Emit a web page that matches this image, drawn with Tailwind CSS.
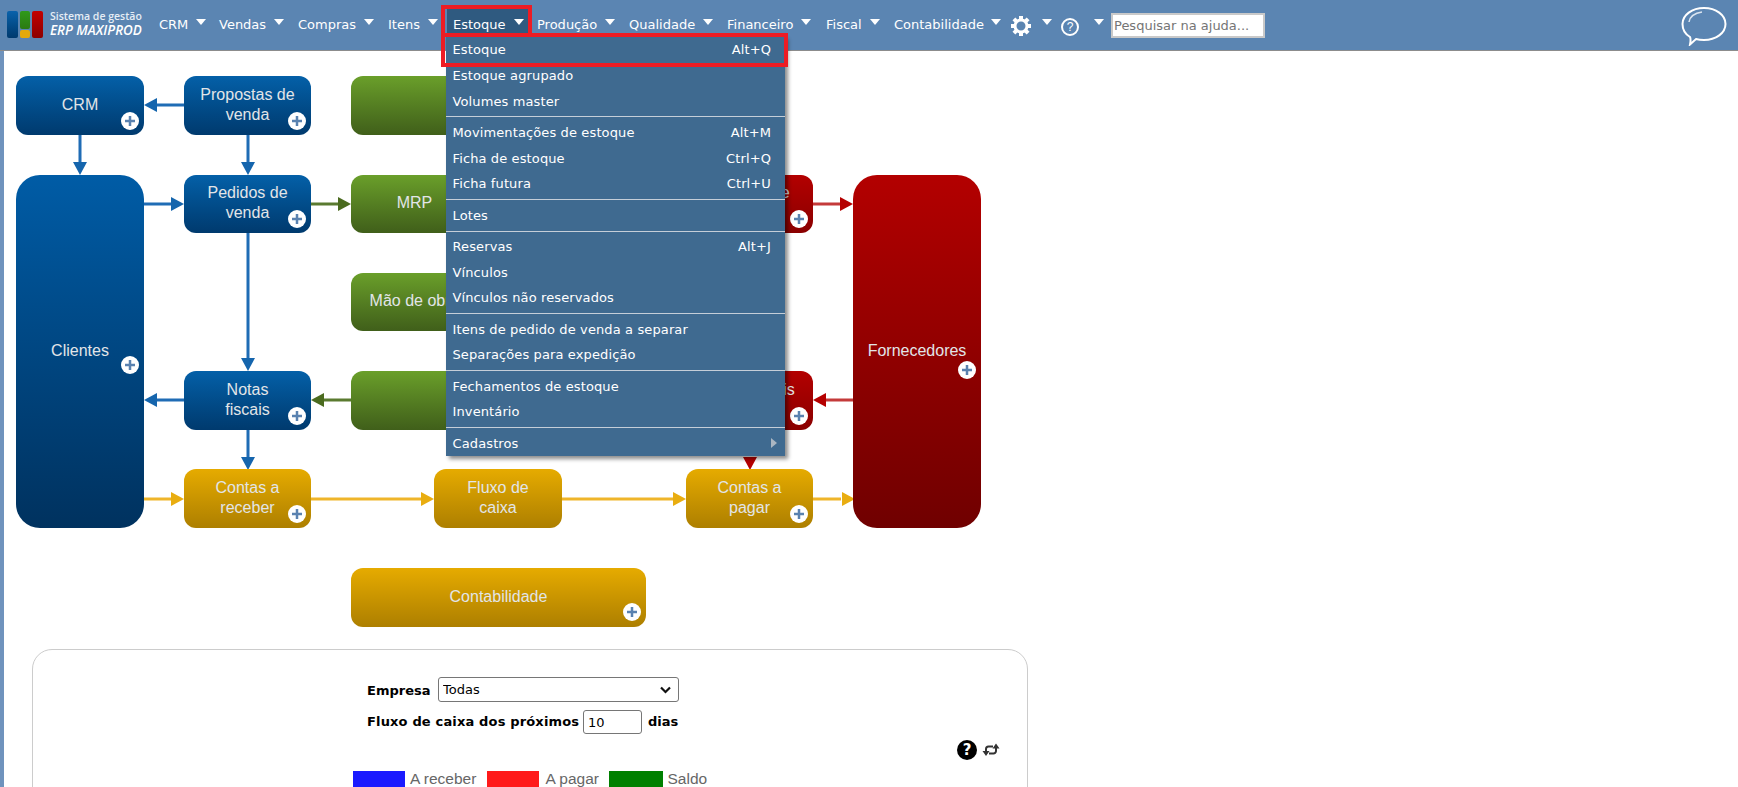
<!DOCTYPE html>
<html lang="pt-BR">
<head>
    <meta charset="UTF-8">
    <title>ERP MAXIPROD</title>
    <script src="https://cdn.jsdelivr.net/npm/@tailwindcss/browser@4"></script>
</head>
<body class="h-[787px] overflow-hidden bg-white font-['DejaVu_Sans',sans-serif] text-[13px]">
    <!-- Top menu -->
    <header class="relative z-20 flex h-[51px] items-center border-b border-[#8c8c8c] bg-[#5b85b2] text-white">
        <!-- Logo -->
        <div class="flex w-[159px] shrink-0 -translate-y-[1px] items-center pl-[7px]">
            <div class="flex h-[27px] w-[36px] shrink-0 gap-[2px]">
                <div class="w-[11px] rounded-[2px] bg-gradient-to-b from-[#0a62ab] to-[#003a6e]"></div>
                <div class="flex w-[11px] flex-col gap-[1px]">
                    <div class="h-[18px] rounded-[2px] bg-gradient-to-b from-[#2f9a1a] to-[#2b7a12]"></div>
                    <div class="h-[8px] rounded-[2px] bg-[#e3a90c]"></div>
                </div>
                <div class="w-[11px] rounded-[2px] bg-gradient-to-b from-[#c40000] to-[#8c0000]"></div>
            </div>
            <div class="ml-[7px] whitespace-nowrap font-['Open_Sans',sans-serif] leading-none">
                <div class="text-[10.5px] font-semibold text-[#e6edf5]">Sistema de gestão</div>
                <div class="mt-[3px] text-[13.4px] font-semibold italic">ERP MAXIPROD</div>
            </div>
        </div>

        <nav class="flex items-center whitespace-nowrap">
            <a class="flex w-[60px] items-center">CRM<i class="ml-[8px] h-0 w-0 -translate-y-[3px] border-x-[5.5px] border-t-[6px] border-x-transparent border-t-white"></i></a>
            <a class="flex w-[79px] items-center">Vendas<i class="ml-[8px] h-0 w-0 -translate-y-[3px] border-x-[5.5px] border-t-[6px] border-x-transparent border-t-white"></i></a>
            <a class="flex w-[90px] items-center">Compras<i class="ml-[8px] h-0 w-0 -translate-y-[3px] border-x-[5.5px] border-t-[6px] border-x-transparent border-t-white"></i></a>
            <a class="flex w-[65px] items-center">Itens<i class="ml-[8px] h-0 w-0 -translate-y-[3px] border-x-[5.5px] border-t-[6px] border-x-transparent border-t-white"></i></a>
            <a class="relative flex w-[84px] items-center">
                <span class="absolute -left-[6px] -top-[8px] h-[30px] w-[81px] bg-[#2f5a80]"></span>
                <span class="relative">Estoque</span><i class="relative ml-[8px] h-0 w-0 -translate-y-[3px] border-x-[5.5px] border-t-[6px] border-x-transparent border-t-white"></i>
            </a>
            <a class="flex w-[92px] items-center">Produção<i class="ml-[8px] h-0 w-0 -translate-y-[3px] border-x-[5.5px] border-t-[6px] border-x-transparent border-t-white"></i></a>
            <a class="flex w-[98px] items-center">Qualidade<i class="ml-[8px] h-0 w-0 -translate-y-[3px] border-x-[5.5px] border-t-[6px] border-x-transparent border-t-white"></i></a>
            <a class="flex w-[99px] items-center">Financeiro<i class="ml-[8px] h-0 w-0 -translate-y-[3px] border-x-[5.5px] border-t-[6px] border-x-transparent border-t-white"></i></a>
            <a class="flex w-[68px] items-center">Fiscal<i class="ml-[8px] h-0 w-0 -translate-y-[3px] border-x-[5.5px] border-t-[6px] border-x-transparent border-t-white"></i></a>
            <a class="flex w-[115px] items-center">Contabilidade<i class="ml-[7px] h-0 w-0 -translate-y-[3px] border-x-[5.5px] border-t-[6px] border-x-transparent border-t-white"></i></a>
        </nav>

        <!-- Gear -->
        <div class="flex w-[50px] items-center">
            <svg class="ml-[1px] mt-[1px] h-[22px] w-[22px]" viewBox="0 0 22 22">
                <circle cx="11" cy="11" r="6" fill="none" stroke="#fff" stroke-width="3"/>
                <g fill="#fff">
                    <rect x="9" y="1" width="4" height="4"/>
                    <rect x="9" y="17" width="4" height="4"/>
                    <rect x="1" y="9" width="4" height="4"/>
                    <rect x="17" y="9" width="4" height="4"/>
                    <rect x="9" y="1" width="4" height="4" transform="rotate(45 11 11)"/>
                    <rect x="9" y="17" width="4" height="4" transform="rotate(45 11 11)"/>
                    <rect x="1" y="9" width="4" height="4" transform="rotate(45 11 11)"/>
                    <rect x="17" y="9" width="4" height="4" transform="rotate(45 11 11)"/>
                </g>
            </svg>
            <i class="ml-[10px] h-0 w-0 -translate-y-[3px] border-x-[5.5px] border-t-[6px] border-x-transparent border-t-white"></i>
        </div>
        <!-- Help -->
        <div class="flex w-[52px] items-center">
            <span class="ml-[2px] mt-[3px] flex h-[18px] w-[18px] items-center justify-center rounded-full border-2 border-white font-['Liberation_Sans',sans-serif] text-[12px] leading-none">?</span>
            <i class="ml-[15px] h-0 w-0 -translate-y-[3px] border-x-[5.5px] border-t-[6px] border-x-transparent border-t-white"></i>
        </div>

        <input class="h-[25px] w-[154px] border-2 border-[#c9c9c9] bg-white pl-[1px] text-[13px] text-[#757575] placeholder:text-[#757575]" placeholder="Pesquisar na ajuda...">

        <svg class="absolute left-[1681px] top-[6px] h-[40px] w-[46px]" viewBox="0 0 46 40">
            <path d="M9 31C4 28 1.500 23 1.500 18 1.500 9 11 2 23 2s21.500 7 21.500 16S35 34 23 34c-3 0-6-.4-8-1l-6 5.500C9.500 36 10 33 9 31Z" fill="none" stroke="#fff" stroke-width="2"/>
            <path d="M8 16C9 10 14 7 21 6" fill="none" stroke="#dbe5f0" stroke-width="1.500"/>
        </svg>

        <!-- Open dropdown -->
        <div class="absolute left-[446px] top-[36px] w-[339px] bg-[#3f6a90] pt-[1px] tracking-[0.12px] shadow-[3px_3px_4px_rgba(0,0,0,0.45)]">
            <a class="flex h-[25.72px] items-center justify-between pl-[6.5px] pr-[14px]"><span>Estoque</span><span>Alt+Q</span></a>
            <a class="flex h-[25.72px] items-center justify-between pl-[6.5px] pr-[14px]"><span>Estoque agrupado</span></a>
            <a class="flex h-[25.72px] items-center justify-between pl-[6.5px] pr-[14px]"><span>Volumes master</span></a>
            <hr class="my-[2.3px] border-t border-[#c5ced8]">
            <a class="flex h-[25.72px] items-center justify-between pl-[6.5px] pr-[14px]"><span>Movimentações de estoque</span><span>Alt+M</span></a>
            <a class="flex h-[25.72px] items-center justify-between pl-[6.5px] pr-[14px]"><span>Ficha de estoque</span><span>Ctrl+Q</span></a>
            <a class="flex h-[25.72px] items-center justify-between pl-[6.5px] pr-[14px]"><span>Ficha futura</span><span>Ctrl+U</span></a>
            <hr class="my-[2.3px] border-t border-[#c5ced8]">
            <a class="flex h-[25.72px] items-center justify-between pl-[6.5px] pr-[14px]"><span>Lotes</span></a>
            <hr class="my-[2.3px] border-t border-[#c5ced8]">
            <a class="flex h-[25.72px] items-center justify-between pl-[6.5px] pr-[14px]"><span>Reservas</span><span>Alt+J</span></a>
            <a class="flex h-[25.72px] items-center justify-between pl-[6.5px] pr-[14px]"><span>Vínculos</span></a>
            <a class="flex h-[25.72px] items-center justify-between pl-[6.5px] pr-[14px]"><span>Vínculos não reservados</span></a>
            <hr class="my-[2.3px] border-t border-[#c5ced8]">
            <a class="flex h-[25.72px] items-center justify-between pl-[6.5px] pr-[14px]"><span>Itens de pedido de venda a separar</span></a>
            <a class="flex h-[25.72px] items-center justify-between pl-[6.5px] pr-[14px]"><span>Separações para expedição</span></a>
            <hr class="my-[2.3px] border-t border-[#c5ced8]">
            <a class="flex h-[25.72px] items-center justify-between pl-[6.5px] pr-[14px]"><span>Fechamentos de estoque</span></a>
            <a class="flex h-[25.72px] items-center justify-between pl-[6.5px] pr-[14px]"><span>Inventário</span></a>
            <hr class="my-[2.3px] border-t border-[#c5ced8]">
            <a class="flex h-[25.72px] items-center justify-between pl-[6.5px] pr-[8px]"><span>Cadastros</span><i class="h-0 w-0 border-y-[5px] border-l-[6px] border-y-transparent border-l-[#aab6c2]"></i></a>
        </div>

        <!-- Red annotation boxes -->
        <div class="absolute left-[441px] top-[5px] h-[32px] w-[91px] border-4 border-[#ed1c24]"></div>
        <div class="absolute left-[441px] top-[33px] h-[34px] w-[347px] border-4 border-[#ed1c24]"></div>
    </header>

    <main class="h-[736px] overflow-hidden border-l-4 border-[#6f93bd]">
        <!-- Flow diagram -->
        <div class="relative h-[587px] font-['Liberation_Sans',sans-serif] text-[16px] leading-[20px] text-[#e2e5e8]">
            <svg class="absolute left-0 top-0 h-[587px] w-[1000px]" viewBox="0 0 1000 587">
                <g stroke-width="3" fill="none">
                    <path stroke="#1f6cb5" d="M180 54H152M76 84V112M244 84V112M140 153H168M244 182V308M180 349H152M244 379V406"/>
                    <path stroke="#5a7a30" d="M307 153H335M347 349H319"/>
                    <path stroke="#c43a3a" d="M809 153H837M849 349H821"/>
                    <path stroke="#efb52a" d="M140 448H168M307 448H418M558 448H670M809 448H837"/>
                </g>
                <g fill="#1565ad">
                    <polygon points="140,54 153,47 153,61"/>
                    <polygon points="76,124 69,111 83,111"/>
                    <polygon points="244,124 237,111 251,111"/>
                    <polygon points="180,153 167,146 167,160"/>
                    <polygon points="244,320 237,307 251,307"/>
                    <polygon points="140,349 153,342 153,356"/>
                    <polygon points="244,419 237,406 251,406"/>
                </g>
                <g fill="#4b6b1f">
                    <polygon points="347,153 334,146 334,160"/>
                    <polygon points="307,349 320,342 320,356"/>
                </g>
                <g fill="#b50000">
                    <polygon points="849,153 836,146 836,160"/>
                    <polygon points="809,349 822,342 822,356"/>
                    <polygon points="746,419 739,406 753,406"/>
                </g>
                <g fill="#e9ad10">
                    <polygon points="180,448 167,441 167,455"/>
                    <polygon points="430,448 417,441 417,455"/>
                    <polygon points="682,448 669,441 669,455"/>
                    <polygon points="851,448 838,441 838,455"/>
                </g>
            </svg>

            <!-- Blue nodes -->
            <div class="absolute left-[12px] top-[25px] flex h-[59px] w-[128px] items-center justify-center rounded-[12px] bg-gradient-to-b from-[#0460a8] to-[#003a6e] pb-[2px] text-center">CRM
                <span class="absolute bottom-[5px] right-[5px] flex h-[18px] w-[18px] items-center justify-center rounded-full bg-white"><svg class="h-[12px] w-[12px]" viewBox="0 0 12 12"><path d="M6 1V11M1 6H11" stroke="#5a82b0" stroke-width="2.500"/></svg></span>
            </div>
            <div class="absolute left-[180px] top-[25px] flex h-[59px] w-[127px] items-center justify-center rounded-[12px] bg-gradient-to-b from-[#0460a8] to-[#003a6e] pb-[2px] text-center">Propostas de<br>venda
                <span class="absolute bottom-[5px] right-[5px] flex h-[18px] w-[18px] items-center justify-center rounded-full bg-white"><svg class="h-[12px] w-[12px]" viewBox="0 0 12 12"><path d="M6 1V11M1 6H11" stroke="#5a82b0" stroke-width="2.500"/></svg></span>
            </div>
            <div class="absolute left-[180px] top-[124px] flex h-[58px] w-[127px] items-center justify-center rounded-[12px] bg-gradient-to-b from-[#0460a8] to-[#003a6e] pb-[2px] text-center">Pedidos de<br>venda
                <span class="absolute bottom-[5px] right-[5px] flex h-[18px] w-[18px] items-center justify-center rounded-full bg-white"><svg class="h-[12px] w-[12px]" viewBox="0 0 12 12"><path d="M6 1V11M1 6H11" stroke="#5a82b0" stroke-width="2.500"/></svg></span>
            </div>
            <div class="absolute left-[180px] top-[320px] flex h-[59px] w-[127px] items-center justify-center rounded-[12px] bg-gradient-to-b from-[#0460a8] to-[#003a6e] pb-[2px] text-center">Notas<br>fiscais
                <span class="absolute bottom-[5px] right-[5px] flex h-[18px] w-[18px] items-center justify-center rounded-full bg-white"><svg class="h-[12px] w-[12px]" viewBox="0 0 12 12"><path d="M6 1V11M1 6H11" stroke="#5a82b0" stroke-width="2.500"/></svg></span>
            </div>
            <div class="absolute left-[12px] top-[124px] flex h-[353px] w-[128px] items-center justify-center rounded-[24px] bg-gradient-to-b from-[#005ca6] to-[#00325f] pb-[2px] text-center">Clientes
                <span class="absolute right-[5px] top-[181px] flex h-[18px] w-[18px] items-center justify-center rounded-full bg-white"><svg class="h-[12px] w-[12px]" viewBox="0 0 12 12"><path d="M6 1V11M1 6H11" stroke="#5a82b0" stroke-width="2.500"/></svg></span>
            </div>

            <!-- Green nodes -->
            <div class="absolute left-[347px] top-[25px] h-[59px] w-[127px] rounded-[12px] bg-gradient-to-b from-[#6a9f2a] to-[#405f1a]"></div>
            <div class="absolute left-[347px] top-[124px] flex h-[58px] w-[127px] items-center justify-center rounded-[12px] bg-gradient-to-b from-[#6a9f2a] to-[#405f1a] pb-[2px] text-center">MRP</div>
            <div class="absolute left-[347px] top-[222px] flex h-[58px] w-[127px] items-center justify-center rounded-[12px] bg-gradient-to-b from-[#6a9f2a] to-[#405f1a] pb-[2px] text-center">Mão de obra</div>
            <div class="absolute left-[347px] top-[320px] h-[59px] w-[127px] rounded-[12px] bg-gradient-to-b from-[#6a9f2a] to-[#405f1a]"></div>

            <!-- Red nodes -->
            <div class="absolute left-[682px] top-[124px] flex h-[58px] w-[127px] items-center justify-center rounded-[12px] bg-gradient-to-b from-[#b30000] to-[#8a0000] pb-[2px] text-center">Pedidos de<br>compra
                <span class="absolute bottom-[5px] right-[5px] flex h-[18px] w-[18px] items-center justify-center rounded-full bg-white"><svg class="h-[12px] w-[12px]" viewBox="0 0 12 12"><path d="M6 1V11M1 6H11" stroke="#5a82b0" stroke-width="2.500"/></svg></span>
            </div>
            <div class="absolute left-[682px] top-[320px] flex h-[59px] w-[127px] items-center justify-center rounded-[12px] bg-gradient-to-b from-[#b30000] to-[#8a0000] pb-[2px] text-center">Notas fiscais<br>compra
                <span class="absolute bottom-[5px] right-[5px] flex h-[18px] w-[18px] items-center justify-center rounded-full bg-white"><svg class="h-[12px] w-[12px]" viewBox="0 0 12 12"><path d="M6 1V11M1 6H11" stroke="#5a82b0" stroke-width="2.500"/></svg></span>
            </div>
            <div class="absolute left-[849px] top-[124px] flex h-[353px] w-[128px] items-center justify-center rounded-[24px] bg-gradient-to-b from-[#b30000] to-[#700000] pb-[2px] text-center">Fornecedores
                <span class="absolute right-[5px] top-[186px] flex h-[18px] w-[18px] items-center justify-center rounded-full bg-white"><svg class="h-[12px] w-[12px]" viewBox="0 0 12 12"><path d="M6 1V11M1 6H11" stroke="#5a82b0" stroke-width="2.500"/></svg></span>
            </div>

            <!-- Gold nodes -->
            <div class="absolute left-[180px] top-[418px] flex h-[59px] w-[127px] items-center justify-center rounded-[12px] bg-gradient-to-b from-[#e6ab00] to-[#ad7f00] pb-[2px] text-center">Contas a<br>receber
                <span class="absolute bottom-[5px] right-[5px] flex h-[18px] w-[18px] items-center justify-center rounded-full bg-white"><svg class="h-[12px] w-[12px]" viewBox="0 0 12 12"><path d="M6 1V11M1 6H11" stroke="#5a82b0" stroke-width="2.500"/></svg></span>
            </div>
            <div class="absolute left-[430px] top-[418px] flex h-[59px] w-[128px] items-center justify-center rounded-[12px] bg-gradient-to-b from-[#e6ab00] to-[#ad7f00] pb-[2px] text-center">Fluxo de<br>caixa</div>
            <div class="absolute left-[682px] top-[418px] flex h-[59px] w-[127px] items-center justify-center rounded-[12px] bg-gradient-to-b from-[#e6ab00] to-[#ad7f00] pb-[2px] text-center">Contas a<br>pagar
                <span class="absolute bottom-[5px] right-[5px] flex h-[18px] w-[18px] items-center justify-center rounded-full bg-white"><svg class="h-[12px] w-[12px]" viewBox="0 0 12 12"><path d="M6 1V11M1 6H11" stroke="#5a82b0" stroke-width="2.500"/></svg></span>
            </div>
            <div class="absolute left-[347px] top-[517px] flex h-[59px] w-[295px] items-center justify-center rounded-[12px] bg-gradient-to-b from-[#e6ab00] to-[#ad7f00] pb-[2px] text-center">Contabilidade
                <span class="absolute bottom-[6px] right-[5px] flex h-[18px] w-[18px] items-center justify-center rounded-full bg-white"><svg class="h-[12px] w-[12px]" viewBox="0 0 12 12"><path d="M6 1V11M1 6H11" stroke="#5a82b0" stroke-width="2.500"/></svg></span>
            </div>
        </div>

        <!-- Cash flow panel -->
        <section class="relative ml-[28px] mt-[11px] h-[300px] w-[996px] rounded-[20px] border border-[#cccccc] pl-[334px] pt-[26px]">
            <div class="flex h-[26px] items-center font-bold">
                <label class="mt-[4px] w-[71px]">Empresa</label>
                <div class="relative">
                    <select class="block h-[25px] w-[241px] appearance-none rounded-[3px] border border-[#767676] bg-white pl-[4px] pt-[2px] font-normal">
                        <option>Todas</option>
                    </select>
                    <svg class="pointer-events-none absolute right-[8px] top-[9px] h-[8px] w-[11px]" viewBox="0 0 11 8"><path d="M1 1.500L5.500 6 10 1.500" fill="none" stroke="#111" stroke-width="2.200"/></svg>
                </div>
            </div>
            <div class="mt-[8px] flex h-[24px] items-center font-bold">
                <label class="w-[216px] whitespace-nowrap tracking-[0.16px]">Fluxo de caixa dos próximos</label>
                <input class="h-[24px] w-[59px] rounded-[3px] border border-[#767676] pl-[4px] font-normal" value="10">
                <span class="ml-[6px]">dias</span>
            </div>
            <div class="absolute right-[27px] top-[90px] flex items-center gap-[5px]">
                <span class="flex h-[20px] w-[20px] items-center justify-center rounded-full bg-black text-[15px] font-bold leading-none text-white">?</span>
                <svg class="h-[14px] w-[18px]" viewBox="0 0 18 14"><path d="M4 9V6a2.500 2.500 0 0 1 2.500-2.500H11M14 5V8a2.500 2.500 0 0 1-2.500 2.500H7" fill="none" stroke="#333" stroke-width="2"/><path d="M.5 8H7.500L4 13ZM10.500 5.500H17.500L14 .5Z" fill="#333"/></svg>
            </div>
            <div class="mt-[37px] -ml-[14px] flex items-start font-['Liberation_Sans',sans-serif] text-[15.5px] leading-[16px] text-[#666]">
                <span class="h-[20px] w-[52px] bg-[#1a1aff]"></span><span class="ml-[5px] w-[76.5px]">A receber</span>
                <span class="h-[20px] w-[52px] bg-[#ff1a1a]"></span><span class="ml-[7px] w-[63px]">A pagar</span>
                <span class="h-[20px] w-[54px] bg-[#008000]"></span><span class="ml-[5px]">Saldo</span>
            </div>
        </section>
    </main>
</body>
</html>
